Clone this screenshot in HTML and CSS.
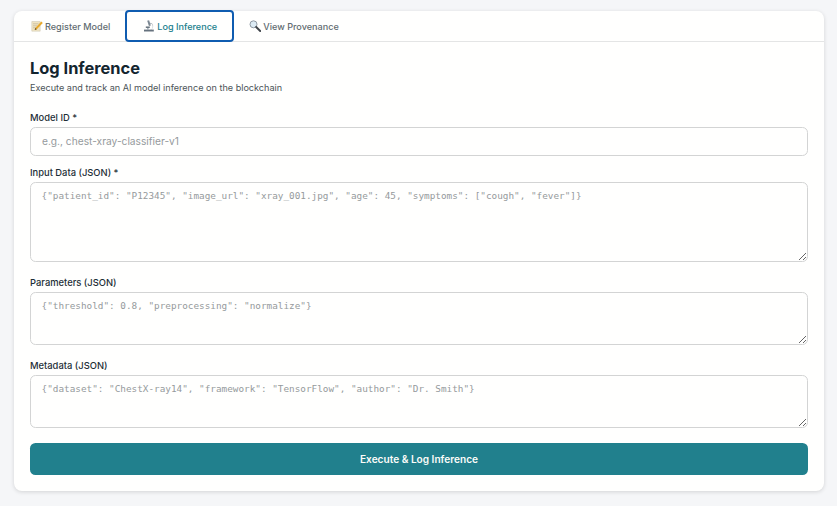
FILE: index.html
```html
<!DOCTYPE html>
<html lang="en">
<head>
    <meta charset="UTF-8">
    <meta name="viewport" content="width=device-width, initial-scale=1.0">
    <title>Log Inference</title>
    <link rel="stylesheet" href="styles.css">
</head>

<body>
    <div class="card">
        <!-- Tabs -->
        <div class="tabs">
            <button class="tab">
                <svg class="tab-icon" viewBox="0 0 12 12">
                    <path d="M.8 1.5h8.4v9.7h-8.4z" fill="#f0e4c2" stroke="#c9c2ae" stroke-width=".5"/>
                    <path d="M2 3.8h5.5M2 5.8h4.2M2 7.8h3.4" stroke="#a8a08c" stroke-width=".5"/>
                    <path d="M4.3 8l6-6.4 1.5 1.4-6 6.3-2.1.7z" fill="#e8a92c"/>
                    <path d="M4.3 8l-.6 2 2.1-.7z" fill="#5a4a30"/>
                </svg>
                Register Model
            </button>
            <button class="tab tab-active">
                <svg class="tab-icon" viewBox="0 0 12 12">
                    <path d="M4.2.8l1.9-.6 1.7 5.200-1.900.6z" fill="#7a8691"/>
                    <path d="M7.400 2.700a3.800 3.800 0 0 1 1 6.900h-1.500a3 3 0 0 0-.2-6z" fill="#8c97a1"/>
                    <path d="M2.800 6.500h4v1.400h-4z" fill="#5a6772"/>
                    <path d="M4 7.900h1.700v1.700h-1.700z" fill="#aab4bd"/>
                    <path d="M1 9.600h9.800v1.900h-9.800z" fill="#66727e"/>
                </svg>
                Log Inference
            </button>
            <button class="tab">
                <svg class="tab-icon" viewBox="0 0 12 12">
                    <circle cx="4.500" cy="4.300" r="3.500" fill="#dcebf5" stroke="#8f99a3" stroke-width="1"/>
                    <path d="M7.200 7l4 4" stroke="#3f444a" stroke-width="1.900" stroke-linecap="round"/>
                </svg>
                View Provenance
            </button>
        </div>

        <!-- Form -->
        <form class="panel">
            <h2 class="panel-title">Log Inference</h2>
            <p class="panel-desc">Execute and track an AI model inference on the blockchain</p>

            <div class="field field-first">
                <label class="field-label" for="model-id">Model ID *</label>
                <input class="field-input" id="model-id" type="text" placeholder="e.g., chest-xray-classifier-v1">
            </div>

            <div class="field">
                <label class="field-label" for="input-data">Input Data (JSON) *</label>
                <textarea class="field-area area-tall" id="input-data" placeholder='{"patient_id": "P12345", "image_url": "xray_001.jpg", "age": 45, "symptoms": ["cough", "fever"]}'></textarea>
            </div>

            <div class="field field-wide">
                <label class="field-label" for="params">Parameters (JSON)</label>
                <textarea class="field-area" id="params" placeholder='{"threshold": 0.8, "preprocessing": "normalize"}'></textarea>
            </div>

            <div class="field field-wide">
                <label class="field-label" for="metadata">Metadata (JSON)</label>
                <textarea class="field-area" id="metadata" placeholder='{"dataset": "ChestX-ray14", "framework": "TensorFlow", "author": "Dr. Smith"}'></textarea>
            </div>

            <button class="submit-btn" type="button">Execute &amp; Log Inference</button>
        </form>
    </div>
</body>
</html>
```

FILE: styles.css
```css
/* Reset */
* {
    margin: 0;
    padding: 0;
    box-sizing: border-box;
}

body {
    font-family: 'Inter', 'Liberation Sans', sans-serif;
    background-color: #f5f6f8;
    color: #13252e;
    padding: 11px 13px 15px 14px;
    min-height: 100vh;
}

.card {
    background-color: #fffffe;
    border-radius: 8px;
    box-shadow: 0 1px 4px rgba(0, 0, 0, 0.14);
}

/* Tabs */
.tabs {
    display: flex;
    height: 31px;
    padding-left: 2px;
    border-bottom: 1px solid #e4e5e5;
}

.tab {
    display: flex;
    align-items: center;
    gap: 2px;
    height: 30px;
    padding: 0 15px;
    font-family: inherit;
    font-size: 9.1px;
    font-weight: 450;
    white-space: nowrap;
    color: #626c71;
    background: none;
    border: none;
}

.tab-active {
    height: 32px;
    width: 109px;
    margin-top: -1px;
    padding: 0 16px;
    color: #21808d;
    border: 2px solid #0f5cb0;
    border-radius: 4px;
    background-color: #fffffe;
}

.tab-icon {
    width: 12px;
    height: 12px;
    flex-shrink: 0;
}

/* Form */
.panel {
    display: flex;
    flex-direction: column;
    padding: 17px 16px 16px;
}

.panel-title {
    font-size: 16.4px;
    line-height: 19px;
    font-weight: 700;
    color: #13252e;
}

.panel-desc {
    font-size: 9.1px;
    line-height: 12px;
    margin-top: 4px;
    color: #4c5558;
}

.field {
    display: flex;
    flex-direction: column;
    margin-top: 11px;
}

.field-first {
    margin-top: 18px;
}

.field-wide {
    margin-top: 15px;
}

.field-label {
    font-size: 9.4px;
    font-weight: 450;
    line-height: 12px;
    margin-bottom: 3px;
    color: #1d2e37;
}

.field-input,
.field-area {
    display: block;
    width: 100%;
    background-color: #fffffe;
    border: 1px solid #d3d4d4;
    border-radius: 5.5px;
    color: #13252e;
    outline: none;
}

.field-input {
    height: 29px;
    padding: 0 11px 2px;
    font-family: inherit;
    font-size: 10.2px;
}

.field-area {
    height: 53px;
    padding: 6px 10.5px;
    font-family: 'DejaVu Sans Mono', 'Liberation Mono', monospace;
    font-size: 9.35px;
    line-height: 13px;
    resize: vertical;
}

.area-tall {
    height: 80px;
}

.field-input::placeholder,
.field-area::placeholder {
    color: #959a9c;
    opacity: 1;
}

.submit-btn {
    height: 32px;
    margin-top: 15px;
    font-family: inherit;
    font-size: 10.1px;
    font-weight: 600;
    color: #fcfcf9;
    background-color: #21808d;
    border: none;
    border-radius: 5.5px;
}
```
